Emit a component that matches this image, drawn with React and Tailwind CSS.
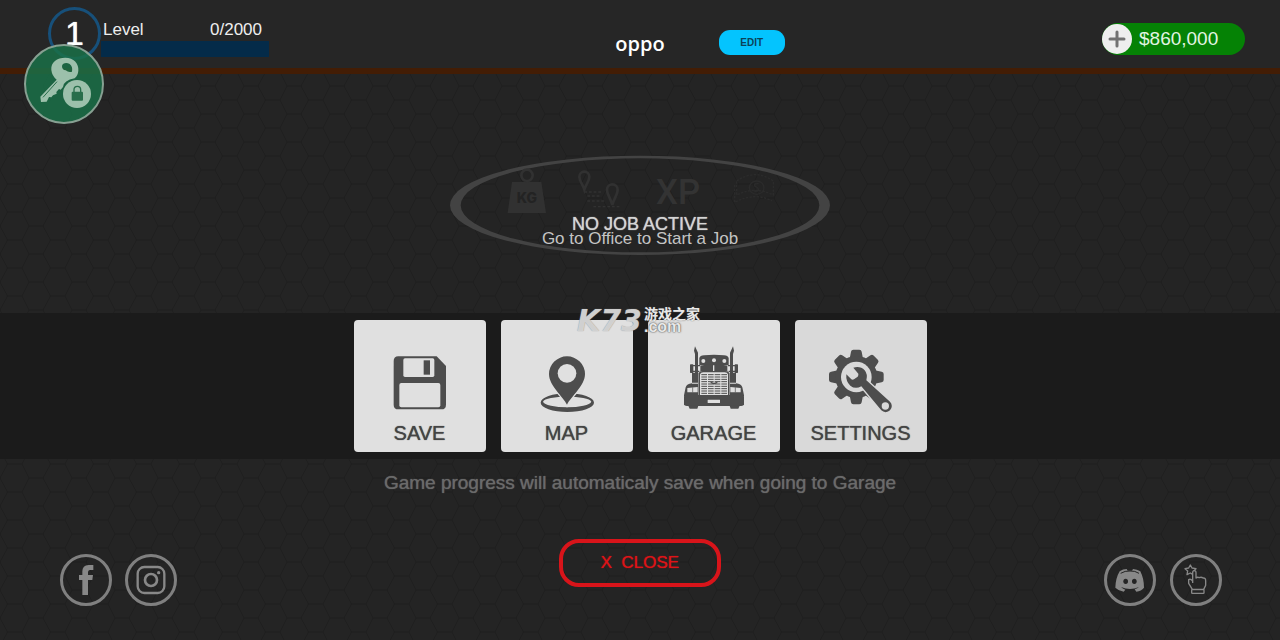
import { Plus } from "lucide-react";

const SaveIcon = () => (
  <svg className="w-18 h-18" viewBox="132 132 216 216" aria-hidden="true">
    <path fill="#4d4d4d" d="M175 169H290L318 198V314Q318 328 304 328H175Q161 328 161 314V183Q161 169 175 169Z" />
    <rect x="190" y="175" width="93" height="56" rx="5" fill="#e0e0e0" />
    <rect x="251" y="181" width="19" height="43" fill="#4d4d4d" />
    <rect x="178" y="249" width="123" height="73" rx="6" fill="#e0e0e0" />
  </svg>
);

const MapIcon = () => (
  <svg className="w-18 h-18" viewBox="573 132 216 216" aria-hidden="true">
    <path
      fill="#4d4d4d"
      fillRule="evenodd"
      d="M602 308a80 28 0 0 1 160 0a80 28 0 0 1-160 0ZM609 305a73 19 0 0 0 145 0a73 17 0 0 0-145 0Z"
    />
    <path
      fill="#4d4d4d"
      stroke="#e0e0e0"
      strokeWidth="8"
      paintOrder="stroke"
      d="M681 314C670 290 627 258 627 222a54 53 0 0 1 108 0C735 258 692 290 681 314Z"
    />
    <circle cx="681" cy="220" r="28" fill="#e0e0e0" />
  </svg>
);

const TruckIcon = () => (
  <svg className="w-18 h-18" viewBox="114 132 216 216" aria-hidden="true">
    <g fill="#4d4d4d">
      <path d="M165 139L174 158V250H165V162L162 152ZM279 139L270 158V250H279V162L282 152Z" />
      <path d="M178 196V174Q180 167 192 166Q222 163 252 166Q264 167 266 174V196Z" />
      <path d="M181 197Q200 193 219 193V214H181ZM223 193Q243 193 262 197V214H223Z" />
      <rect x="150" y="193" width="10" height="26" rx="2" />
      <rect x="284" y="193" width="10" height="26" rx="2" />
      <path d="M158 195H180V199H158ZM158 212H178V216H158ZM264 195H286V199H264ZM266 212H286V216H266Z" />
      <path d="M156 218H175V288H132V286L137 262Q140 252 156 250ZM288 218H269V288H312V286L307 262Q304 252 288 250Z" />
      <path d="M134 285H310Q312 285 312 290V313Q311 318 304 318H140Q133 318 132 313V290Q132 285 134 285Z" />
      <path d="M145 317H175L172 326H149ZM299 317H269L272 326H295Z" />
      <path d="M176 219Q178 213 188 213H256Q266 213 268 219V288H176Z" />
    </g>
    <g fill="#e0e0e0">
      <circle cx="190" cy="183" r="6" />
      <circle cx="222" cy="181" r="6" />
      <circle cx="253" cy="183" r="6" />
      <path d="M180 223Q182 217 190 217H254Q262 217 264 223V285H180Z" />
      <path d="M142 264L173 261V277H142ZM302 264L271 261V277H302Z" />
      <rect x="203" y="299" width="37" height="10" rx="1" />
      <path d="M156 248H174V251H156ZM270 248H288V251H270Z" />
    </g>
    <path
      stroke="#4d4d4d"
      strokeWidth="3"
      strokeDasharray="17 3"
      d="M184 224H261M184 231H261M184 238H261M184 245H261M184 252H261M184 259H261M184 266H261M184 273H261M184 280H261"
    />
    <path d="M212 247L222 251L232 247" fill="none" stroke="#4d4d4d" strokeWidth="4" />
    <path d="M158 262V277M286 262V277" stroke="#4d4d4d" strokeWidth="2" />
  </svg>
);

const gearAngles = [0, 45, 90, 135, 180, 225, 270, 315];

const SettingsIcon = () => (
  <svg className="w-18 h-18" viewBox="558 132 216 216" aria-hidden="true">
    <g fill="#4d4d4d">
      {gearAngles.map((angle) => (
        <path
          key={angle}
          transform={`rotate(${angle} 652 231)`}
          d="M632 176L636 155Q637 149 643 149H661Q667 149 668 155L672 176Z"
        />
      ))}
      <circle cx="652" cy="231" r="63" />
    </g>
    <circle cx="652" cy="231" r="46" fill="#d9d9d9" />
    <path
      fill="#4d4d4d"
      stroke="#d9d9d9"
      strokeWidth="8"
      strokeLinejoin="round"
      paintOrder="stroke"
      d="M643 203Q664 197 677 211Q687 223 682 241L753 305A18 18 0 0 1 727 331L667 259Q649 269 634 257Q620 245 622 223L637 238Q641 240 645 238L656 230Q659 226 658 221Z"
    />
    <circle cx="739" cy="318" r="11" fill="#d9d9d9" />
  </svg>
);

const cards = [
  { label: "SAVE", icon: SaveIcon, color: "bg-[#e0e0e0]" },
  { label: "MAP", icon: MapIcon, color: "bg-[#e0e0e0]" },
  { label: "GARAGE", icon: TruckIcon, color: "bg-[#e0e0e0]" },
  { label: "SETTINGS", icon: SettingsIcon, color: "bg-[#d9d9d9]" },
];

const HexBackground = () => (
  <svg className="absolute inset-0 w-full h-full" aria-hidden="true">
    <defs>
      <pattern id="hex" x="112" y="142" width="43" height="28" patternUnits="userSpaceOnUse">
        <path
          d="M3 0H17L24.500 14L17 28H3M24.500 14H39L46 0M39 14L46 28M3 0L-4 14L3 28"
          fill="none"
          stroke="#1e1e1e"
          strokeWidth="1"
        />
      </pattern>
    </defs>
    <rect width="100%" height="100%" fill="url(#hex)" />
  </svg>
);

const KeyBadge = () => (
  <button
    aria-label="Unlock"
    className="absolute left-6 top-11 z-20 w-20 h-20 rounded-full border-2 border-[#87a092] bg-[#1a7048]/85"
  >
    <svg className="w-full h-full" viewBox="79 139 228 228" aria-hidden="true">
      <path
        fill="#9cc0ab"
        fillRule="evenodd"
        d="M155 211C153 187 172 174 197 174C222 174 238 191 236 213Q235 227 225 236Q192 242 190 262L183 270L178 268L170 277L171 282L160 287L155 293L148 292L141 306L124 307L122 291L171 240Q157 229 155 211ZM187 199C188 190 201 187 210 193Q220 201 217 216Q207 220 198 212Q187 211 187 199Z"
      />
      <path d="M130 293L172 246" stroke="#286e4b" strokeWidth="3" />
      <circle cx="232" cy="283" r="42" fill="#9cc0ab" />
      <rect x="216" y="276" width="34" height="27" rx="3" fill="#286e4b" />
      <path d="M223 277V270a10 10 0 0 1 20 0V277" fill="none" stroke="#286e4b" strokeWidth="4" />
    </svg>
  </button>
);

const JobStatus = () => (
  <section className="relative w-[380px] h-[100px] mx-auto pt-[62px] text-center">
    <svg className="absolute inset-0 w-full h-full" viewBox="30 30 1140 300" aria-hidden="true">
      <path
        fill="#434343"
        fillRule="evenodd"
        d="M30 181a570 149 0 0 1 1140 0a570 149 0 0 1-1140 0ZM62 181a538 141 0 0 0 1076 0a538 141 0 0 0-1076 0Z"
      />
      <g fill="#313131">
        <path d="M216 111H304L318 204H203Z" />
        <circle cx="261" cy="91" r="17" fill="none" stroke="#313131" strokeWidth="8" />
        <text x="261" y="174" textAnchor="middle" fontFamily="Inter" fontWeight="800" fontSize="42" fill="#232323">
          KG
        </text>
      </g>
      <g fill="none" stroke="#313131" strokeWidth="8">
        <path d="M433 134C428 118 418 108 418 95a15 15 0 0 1 30 0C448 108 438 118 433 134Z" />
        <path d="M517 180C512 160 501 148 501 134a16 16 0 0 1 32 0C533 148 522 160 517 180Z" />
        <path d="M433 141H488M442 153H484M442 168H492M460 185H540" strokeWidth="4" strokeDasharray="8 6" />
      </g>
      <text x="714" y="178" textAnchor="middle" fontFamily="Roboto" fontWeight="500" fontSize="104" fill="#333333">
        XP
      </text>
      <g fill="none" stroke="#2b2b2b" strokeWidth="4">
        <ellipse cx="950" cy="128" rx="22" ry="20" />
        <path d="M890 108Q945 70 1000 108V150Q945 122 890 150Z" strokeDasharray="7 4" />
        <path d="M884 120V172Q945 140 996 168" strokeDasharray="7 4" />
        <path d="M956 116Q942 114 944 123Q957 129 955 136Q948 141 942 137" />
      </g>
    </svg>
    <h2 className="relative text-[18px] leading-[14px] text-[#d4d4d4] [text-shadow:0_0_1px_#d4d4d4]">NO JOB ACTIVE</h2>
    <p className="relative text-[17px] leading-[15px] text-[#c4c4c4]">Go to Office to Start a Job</p>
  </section>
);

const Watermark = () => (
  <div className="absolute left-1/2 -top-2 -ml-[63px] flex pointer-events-none whitespace-nowrap">
    <span className="w-[67px] pt-1 font-['DejaVu_Sans',sans-serif] font-bold italic text-[30px] leading-6 text-[#dedede]/85 [text-shadow:0_0_1px_#888]">
      K73
    </span>
    <span className="flex flex-col">
      <span className="font-['Noto_Sans_CJK_SC',sans-serif] font-bold text-[14px] leading-4 text-[#e8e8e8] [text-shadow:0_0_1px_#555]">
        游戏之家
      </span>
      <span className="font-bold text-[16px] leading-3 text-[#e8e8e8] [text-shadow:0_0_2px_#555,0_0_1px_#555]">.com</span>
    </span>
  </div>
);

const socialClass = "block w-[52px] h-[52px] rounded-full border-3 border-[#808080] text-[#888888]";

const App = () => {
  return (
    <div className="relative flex flex-col min-h-screen bg-[#242424] font-['Liberation_Sans',Arial,sans-serif]">
      <HexBackground />

      <header className="relative z-10 grid grid-cols-[1fr_auto_1fr] h-[74px] bg-[#262626] border-b-[6px] border-[#431d05]">
        <div className="flex items-start pt-[7px] pl-12">
          <div className="flex items-center justify-center w-[53px] h-[53px] shrink-0 rounded-full border-3 border-[#17507a] text-white text-[34px] [text-shadow:0_0_1px_#fff]">
            1
          </div>
          <div className="w-[168px] pt-3">
            <div className="flex justify-between pl-[2px] pr-[7px] text-[17px] leading-[22px] text-[#eeeeee]">
              <span>Level</span>
              <span>0/2000</span>
            </div>
            <div className="h-4 bg-[#042b49]"></div>
          </div>
        </div>

        <h1 className="pt-[30px] font-['Open_Sans',sans-serif] font-semibold text-[20px] leading-7 text-white">oppo</h1>

        <div className="flex items-start justify-between pl-[54px] pr-[35px]">
          <button className="mt-[30px] w-[66px] h-[25px] rounded-[11px] bg-[#04c4fe] text-[#0b4358] text-[10px] font-bold">
            EDIT
          </button>
          <button className="flex items-center mt-[23px] w-[143px] h-8 rounded-full bg-[#058205] text-[#e2f5e2] text-[19px]">
            <span className="flex items-center justify-center w-[30px] h-[30px] mr-[7px] rounded-full bg-[#eeeeee]">
              <Plus className="w-6 h-6 text-[#727272]" strokeWidth={3} />
            </span>
            $860,000
          </button>
        </div>
      </header>

      <KeyBadge />

      <main className="relative flex flex-col flex-1 pt-[81px]">
        <JobStatus />

        <div className="relative mt-[58px] py-[7px] bg-[#1b1b1b]">
          <div className="flex justify-center gap-[15px]">
            {cards.map(({ label, icon: Icon, color }) => (
              <button
                key={label}
                className={`flex flex-col items-center w-[132px] h-[132px] pt-6 rounded-sm text-[#444444] ${color}`}
              >
                <Icon />
                <span className="mt-[5px] text-[20px] leading-6 [text-shadow:0_0_1px_#444]">{label}</span>
              </button>
            ))}
          </div>
          <Watermark />
        </div>

        <p className="mt-[10px] text-center text-[19px] leading-7 text-[#6a6a6a] [text-shadow:0_0_1px_#6a6a6a]">
          Game progress will automaticaly save when going to Garage
        </p>

        <footer className="grid grid-cols-[1fr_auto_1fr] items-end mt-auto px-[58px] pb-[34px]">
          <div className="flex gap-[13px] pl-[2px]">
            <a href="#facebook" aria-label="Facebook" className={socialClass}>
              <svg className="w-full h-full" viewBox="69 51 138 138" fill="currentColor" aria-hidden="true">
                <path d="M160 75V90H149Q144 91 144 97V105H159L157 120H144V165H127V120H117V105H127V94Q127 76 146 75Z" />
              </svg>
            </a>
            <a href="#instagram" aria-label="Instagram" className={socialClass}>
              <svg className="w-full h-full" viewBox="263 51 138 138" fill="none" stroke="currentColor" strokeWidth="7" aria-hidden="true">
                <rect x="292" y="81" width="80" height="78" rx="20" />
                <circle cx="332" cy="120" r="18" strokeWidth="8" />
                <circle cx="355" cy="98" r="5" fill="currentColor" stroke="none" />
              </svg>
            </a>
          </div>

          <button className="self-start w-[162px] h-12 mb-[19px] rounded-[20px] border-4 border-[#d8141a] text-[#dc1418] text-[17px] whitespace-pre [text-shadow:0_0_1px_#dc1418]">
            {"X  CLOSE"}
          </button>

          <div className="flex justify-end gap-[14px]">
            <a href="#discord" aria-label="Discord" className={socialClass}>
              <svg className="w-full h-full" viewBox="49 51 138 138" fill="currentColor" aria-hidden="true">
                <path d="M87 94Q97 87 108 87L111 92H124L127 87Q139 88 149 94Q160 116 160 143Q152 153 137 155L132 148Q141 145 145 141Q118 153 91 141Q96 146 104 149L99 155Q84 153 74 143Q75 114 87 94Z" />
                <path d="M90 100Q103 92 118 93Q133 92 145 100" fill="none" stroke="#242424" strokeWidth="3" />
                <ellipse cx="105" cy="124" rx="7" ry="8" fill="#242424" />
                <ellipse cx="131" cy="124" rx="7" ry="8" fill="#242424" />
              </svg>
            </a>
            <a href="#rate" aria-label="Rate" className={socialClass}>
              <svg
                className="w-full h-full"
                viewBox="251 51 138 138"
                fill="none"
                stroke="currentColor"
                strokeWidth="4"
                strokeLinejoin="round"
                aria-hidden="true"
              >
                <path d="M310 103L303 99L293 104L295 93L287 86L298 84L303 75L308 84L320 86L313 93" />
                <path d="M310 129V98Q310 92 315 92Q320 92 320 98V114Q324 110 330 113Q336 110 341 114Q349 113 349 122V136L343 148H309L298 130V119Q304 115 310 124" />
                <rect x="307" y="149" width="37" height="11" rx="2" />
              </svg>
            </a>
          </div>
        </footer>
      </main>
    </div>
  );
};

export default App;
